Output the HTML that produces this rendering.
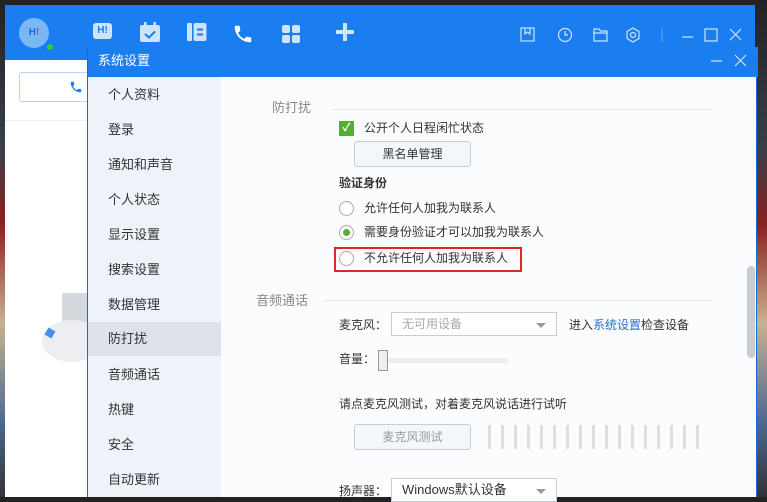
<!DOCTYPE html>
<html><head><meta charset="utf-8"><style>
*{margin:0;padding:0;box-sizing:border-box}
body{width:767px;height:497px;overflow:hidden;position:relative;font-family:"Liberation Sans","Noto Sans CJK SC",sans-serif;font-size:12px;color:#333;background:linear-gradient(180deg,#222 0%,#3a3f48 30%,#8a2020 45%,#c9b090 65%,#4a6a90 85%,#333 100%)}
.abs{position:absolute}
#app{left:5px;top:5px;width:750px;height:492px;background:#fff}
#apphead{left:0;top:0;width:750px;height:55px;background:#1a7df0}
#dlg{left:87px;top:47px;width:670px;height:450px;background:#fbfcfe;border-left:1px solid #1a6ad8;border-right:1px solid #1a6ad8}
#dtitle{left:0;top:0;width:670px;height:30px;background:#1a7df0;color:#fff;font-size:13px;line-height:28px;padding-left:10px}
#side{left:0;top:30px;width:133px;height:420px;background:#eef3fa}
.si{position:absolute;left:0;width:133px;height:34px;line-height:34px;padding-left:20px;font-size:13px;color:#333}
.sel{background:#dde2ea}
.t{position:absolute;white-space:nowrap;line-height:16px}
.radio{position:absolute;width:15px;height:15px;border:1px solid #aaa;border-radius:50%;background:#fff}
.btn{position:absolute;border:1px solid #c8ccd2;border-radius:3px;background:#f3f6fa;text-align:center}
.sel2{position:absolute;border:1px solid #c8ccd2;background:#fff;height:24px;line-height:22px;padding-left:10px}
.sel2:after{content:"";position:absolute;right:10px;top:10px;border:5px solid transparent;border-top:5px solid #999}
</style></head><body>
<div id="app" class="abs">
 <div id="apphead" class="abs">
  <div class="abs" style="left:14px;top:13px;width:30px;height:30px;border-radius:50%;background:#7ab8f5;color:#fff;font-size:10px;font-weight:bold;text-align:center;line-height:30px"><span style="color:#1a6ad8">H</span><span style="color:#e33">!</span></div>
  <div class="abs" style="left:40px;top:37px;width:10px;height:10px;border-radius:50%;background:#3c3;border:2px solid #1a7df0"></div>
  <div class="abs" style="left:88px;top:18px;width:19px;height:16px;border-radius:3px;background:#cfe3fb;color:#1a7df0;font-size:10px;font-weight:bold;text-align:center;line-height:16px">H!</div>
  <svg class="abs" style="left:134px;top:16px" width="22" height="22" viewBox="0 0 22 22"><rect x="1" y="4" width="20" height="17" rx="2" fill="#cfe3fb"/><rect x="5" y="1" width="2.5" height="5" fill="#cfe3fb"/><rect x="14.5" y="1" width="2.5" height="5" fill="#cfe3fb"/><path d="M6 13l4 3.5 6-6" stroke="#1a7df0" stroke-width="2" fill="none"/></svg>
  <svg class="abs" style="left:181px;top:17px" width="22" height="20" viewBox="0 0 22 20"><rect x="1" y="1" width="5" height="18" rx="1" fill="#cfe3fb"/><rect x="7.5" y="1" width="13" height="18" rx="2" fill="#cfe3fb"/><path d="M11 7.5h6M11 12.5h6" stroke="#1a7df0" stroke-width="2"/></svg>
  <svg class="abs" style="left:227px;top:18px" width="22" height="22" viewBox="0 0 24 24"><path d="M6.6 10.8c1.4 2.8 3.8 5.1 6.6 6.6l2.2-2.2c.3-.3.7-.4 1-.2 1.1.4 2.3.6 3.6.6.6 0 1 .4 1 1V20c0 .6-.4 1-1 1C10.6 21 3 13.4 3 4c0-.6.4-1 1-1h3.5c.6 0 1 .4 1 1 0 1.3.2 2.5.6 3.6.1.3 0 .7-.2 1z" fill="#fff"/></svg>
  <div class="abs" style="left:277px;top:20px;width:8px;height:8px;border-radius:2px;background:#cfe3fb"></div>
  <div class="abs" style="left:287px;top:20px;width:8px;height:8px;border-radius:2px;background:#cfe3fb"></div>
  <div class="abs" style="left:277px;top:30px;width:8px;height:8px;border-radius:2px;background:#cfe3fb"></div>
  <div class="abs" style="left:287px;top:30px;width:8px;height:8px;border-radius:2px;background:#cfe3fb"></div>
  <div class="abs" style="left:331px;top:25px;width:18px;height:4px;background:#cfe3fb"></div>
  <div class="abs" style="left:338px;top:18px;width:4px;height:18px;background:#cfe3fb"></div>
  <svg class="abs" style="left:510px;top:20px" width="240" height="20" viewBox="0 0 240 20" fill="none" stroke="#cfe3fb" stroke-width="1.2"><rect x="6" y="3" width="13" height="13"/><path d="M10 3v6l2.5-2 2.5 2V3"/><circle cx="50" cy="10" r="6.5"/><path d="M50 6v4h3"/><path d="M79 4h5l1.5 2H92v10H79z M79 8h13"/><path d="M118 3l6 3.5v7L118 17l-6-3.5v-7z"/><circle cx="118" cy="10" r="2.5"/><path d="M147 3v14" stroke="#5a9ff0"/><path d="M167 12h11M190 4h12v12h-12zM215 4l11 11M226 4l-11 11"/></svg>
 </div>
 <div class="abs" style="left:14px;top:67px;width:80px;height:30px;border:1px solid #b9d3f0;border-radius:3px"></div>
 <svg class="abs" style="left:64px;top:75px" width="14" height="14" viewBox="0 0 24 24"><path d="M6.6 10.8c1.4 2.8 3.8 5.1 6.6 6.6l2.2-2.2c.3-.3.7-.4 1-.2 1.1.4 2.3.6 3.6.6.6 0 1 .4 1 1V20c0 .6-.4 1-1 1C10.6 21 3 13.4 3 4c0-.6.4-1 1-1h3.5c.6 0 1 .4 1 1 0 1.3.2 2.5.6 3.6.1.3 0 .7-.2 1z" fill="#1a7df0"/></svg>
 <div class="abs" style="left:0;top:115px;width:90px;height:1px;background:#eee"></div>
 <div class="abs" style="left:57px;top:288px;width:30px;height:52px;background:#d5d8dc"></div>
 <div class="abs" style="left:37px;top:315px;width:60px;height:42px;border-radius:50%;background:#eceef1"></div>
 <div class="abs" style="left:41px;top:324px;width:8px;height:8px;background:#4a8ef0;transform:rotate(30deg)"></div>
</div>
<div id="dlg" class="abs">
 <div id="dtitle" class="abs">系统设置</div>
 <svg class="abs" style="left:615px;top:6px" width="50" height="16" fill="none" stroke="#cfe3fb" stroke-width="1.2"><path d="M8 8h11M32 2l11 11M43 2L32 13"/></svg>
 <div id="side" class="abs">
  <div class="si" style="top:1px">个人资料</div>
  <div class="si" style="top:36px">登录</div>
  <div class="si" style="top:71px">通知和声音</div>
  <div class="si" style="top:106px">个人状态</div>
  <div class="si" style="top:141px">显示设置</div>
  <div class="si" style="top:176px">搜索设置</div>
  <div class="si" style="top:211px">数据管理</div>
  <div class="si sel" style="top:245px">防打扰</div>
  <div class="si" style="top:281px">音频通话</div>
  <div class="si" style="top:316px">热键</div>
  <div class="si" style="top:351px">安全</div>
  <div class="si" style="top:386px">自动更新</div>
 </div>
 <div class="abs" style="left:659px;top:219px;width:8px;height:92px;border-radius:4px;background:#c9cdd3"></div>
</div>
<div class="t" style="left:272px;top:100px;color:#888;font-size:13px">防打扰</div>
<div class="abs" style="left:332px;top:109px;width:380px;height:1px;background:#e3e6ea"></div>
<div class="abs" style="left:339px;top:121px;width:15px;height:15px;background:#52b030;color:#fff;font-size:11px;text-align:center;line-height:15px;font-weight:bold">✓</div>
<div class="t" style="left:364px;top:120px">公开个人日程闲忙状态</div>
<div class="btn" style="left:354px;top:141px;width:117px;height:26px;line-height:24px">黑名单管理</div>
<div class="t" style="left:339px;top:175px;font-weight:bold">验证身份</div>
<div class="radio" style="left:339px;top:201px"></div>
<div class="t" style="left:364px;top:200px">允许任何人加我为联系人</div>
<div class="radio" style="left:339px;top:225px"><div class="abs" style="left:3px;top:3px;width:7px;height:7px;border-radius:50%;background:#52b030"></div></div>
<div class="t" style="left:364px;top:224px">需要身份验证才可以加我为联系人</div>
<div class="abs" style="left:334px;top:247px;width:188px;height:25px;border:2px solid #e0262a"></div>
<div class="radio" style="left:339px;top:251px"></div>
<div class="t" style="left:364px;top:250px">不允许任何人加我为联系人</div>
<div class="t" style="left:256px;top:293px;color:#888;font-size:13px">音频通话</div>
<div class="abs" style="left:324px;top:300px;width:388px;height:1px;background:#e3e6ea"></div>
<div class="t" style="left:339px;top:317px">麦克风：</div>
<div class="sel2" style="left:391px;top:312px;width:166px;color:#aaa">无可用设备</div>
<div class="t" style="left:569px;top:317px">进入<span style="color:#2a6fd0">系统设置</span>检查设备</div>
<div class="t" style="left:339px;top:351px">音量：</div>
<div class="abs" style="left:378px;top:358px;width:130px;height:5px;border-radius:3px;background:#eceef1"></div>
<div class="abs" style="left:378px;top:350px;width:10px;height:21px;border:1px solid #999;background:#eee"></div>
<div class="t" style="left:339px;top:396px">请点麦克风测试，对着麦克风说话进行试听</div>
<div class="btn" style="left:354px;top:424px;width:117px;height:26px;line-height:24px;color:#999">麦克风测试</div>
<div class="abs" style="left:478px;top:425px;width:230px;height:24px;background:repeating-linear-gradient(90deg,transparent 0,transparent 10px,#dcdee1 10px,#dcdee1 13px)"></div>
<div class="t" style="left:339px;top:483px">扬声器：</div>
<div class="sel2" style="left:391px;top:478px;width:166px;color:#333;font-size:13px">Windows默认设备</div>
</body></html>
